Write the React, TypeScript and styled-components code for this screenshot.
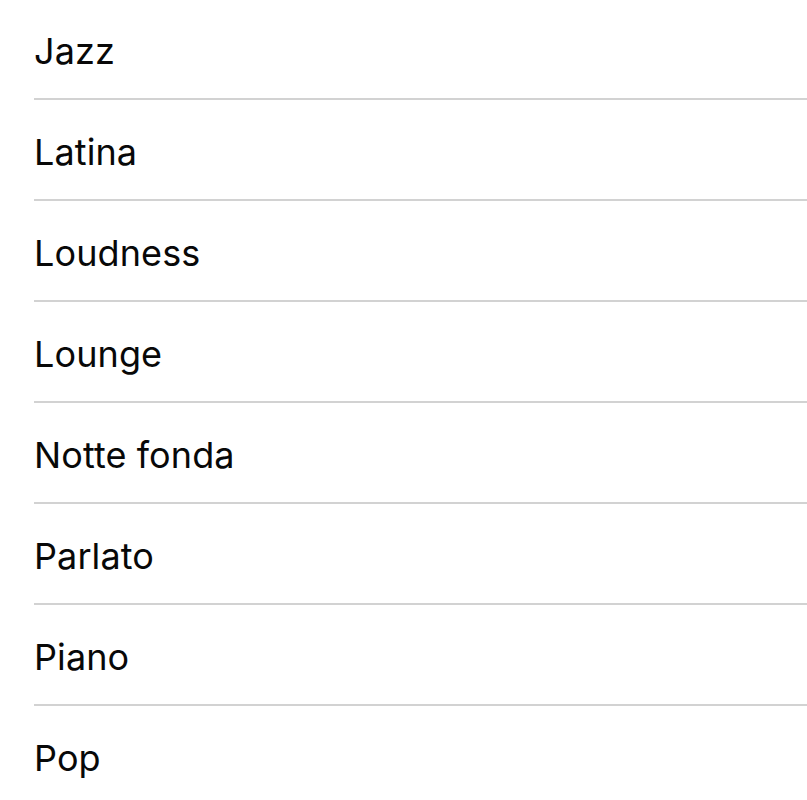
import React from "react";
import styled, { createGlobalStyle } from "styled-components";

const Global = createGlobalStyle`
  html, body { margin: 0; padding: 0; background: #ffffff; }
  body { font-family: Inter, "Liberation Sans", Arial, sans-serif; overflow: hidden; }
`;

const List = styled.ul`
  list-style: none;
  margin: -1px 0 0 0;
  padding: 0 0 0 34px;
  display: flex;
  flex-direction: column;
`;

const Row = styled.li`
  height: 99px;
  box-sizing: content-box;
  border-bottom: 2px solid #d2d2d2;
  display: flex;
  align-items: flex-start;
`;

const Label = styled.span`
  font-size: 36px;
  line-height: 93px;
  padding-top: 6px;
  color: #080808;
  letter-spacing: 0.1px;
`;

const items = [
  "Jazz",
  "Latina",
  "Loudness",
  "Lounge",
  "Notte fonda",
  "Parlato",
  "Piano",
  "Pop",
];

export default function App() {
  return (
    <>
      <Global />
      <List>
        {items.map((t) => (
          <Row key={t}>
            <Label>{t}</Label>
          </Row>
        ))}
      </List>
    </>
  );
}
